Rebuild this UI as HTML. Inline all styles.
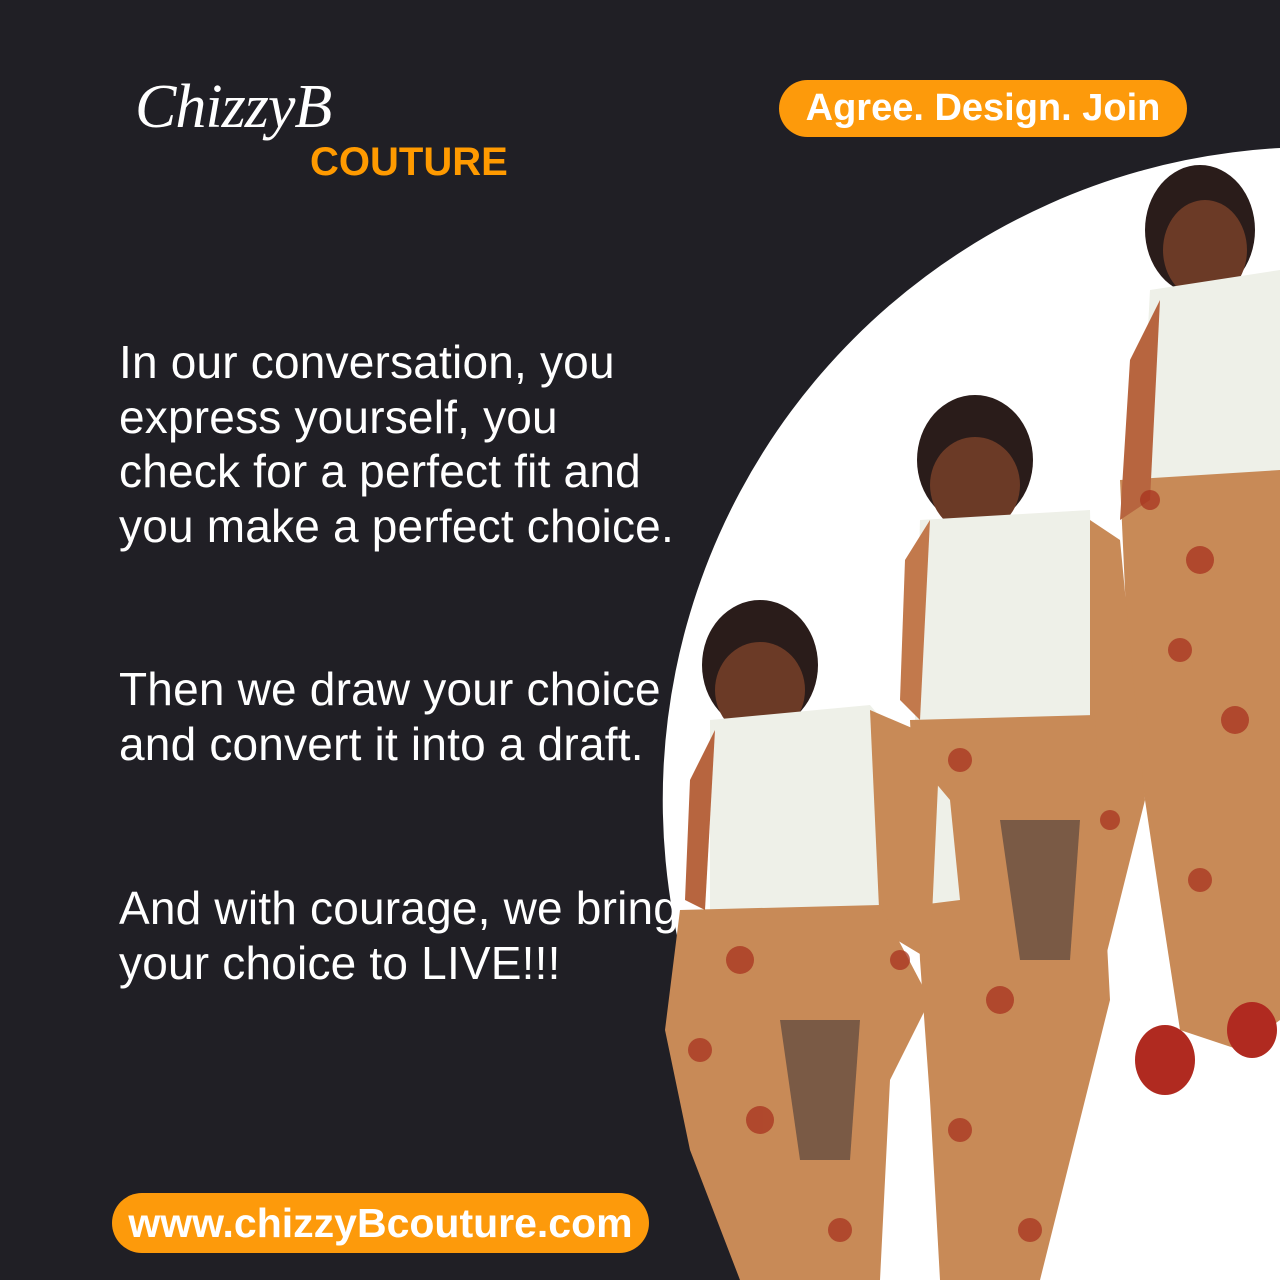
<!DOCTYPE html>
<html style="width:1280px;height:1280px;overflow:hidden"><head><meta charset="utf-8"><style>
*{margin:0;padding:0;box-sizing:border-box}
body{width:1280px;height:1280px;background:#201f25;position:relative;overflow:hidden;font-family:"Liberation Sans",sans-serif}
.t{position:absolute;left:119px;color:#fff;font-size:46px;line-height:54.5px;letter-spacing:0.2px}
.pill{position:absolute;background:#fd9a0b;color:#fff;font-weight:bold;border-radius:30px;text-align:center}
</style></head><body>
<svg style="position:absolute;left:0;top:0;display:block" width="1280" height="1280">
<path d="M1280 148 A653 653 0 0 0 873 1280 L1280 1280 Z" fill="#fff"/>
<g>
<ellipse cx="1200" cy="230" rx="55" ry="65" fill="#2a1c1a"/><ellipse cx="1205" cy="250" rx="42" ry="50" fill="#6b3a26"/>
<path d="M1150 290 L1280 270 L1280 480 L1140 480 Z" fill="#eef0e8"/>
<path d="M1120 480 L1280 470 L1280 1020 L1240 1050 L1180 1030 L1160 900 L1130 700 Z" fill="#c88a57"/>
<path d="M1130 360 L1160 300 L1150 500 L1120 520 Z" fill="#b7653f"/>
<ellipse cx="1165" cy="1060" rx="30" ry="35" fill="#b02a20"/><ellipse cx="1252" cy="1030" rx="25" ry="28" fill="#b02a20"/>
</g>
<g>
<ellipse cx="975" cy="460" rx="58" ry="65" fill="#2a1c1a"/><ellipse cx="975" cy="485" rx="45" ry="48" fill="#6b3a26"/>
<path d="M920 520 L1090 510 L1095 730 L915 720 Z" fill="#eef0e8"/>
<path d="M905 560 L930 520 L920 720 L900 700 Z" fill="#c2794c"/>
<path d="M1090 520 L1120 540 L1145 800 L1100 980 L1090 720 Z" fill="#c88a57"/>
<path d="M910 720 L1095 715 L1110 1000 L1060 1200 L1040 1280 L940 1280 L930 1100 L920 960 Z" fill="#c88a57"/>
<path d="M1000 820 L1080 820 L1070 960 L1020 960 Z" fill="#7a5a45"/>
</g>
<g>
<ellipse cx="760" cy="665" rx="58" ry="65" fill="#2a1c1a"/><ellipse cx="760" cy="690" rx="45" ry="48" fill="#6b3a26"/>
<path d="M710 720 L870 705 L950 800 L960 900 L880 910 L710 910 Z" fill="#eef0e8"/>
<path d="M870 710 L940 740 L930 960 L880 930 Z" fill="#c88a57"/>
<path d="M680 910 L880 905 L930 1000 L890 1080 L880 1280 L740 1280 L690 1150 L665 1030 Z" fill="#c88a57"/>
<path d="M690 780 L715 730 L705 910 L685 900 Z" fill="#b7653f"/>
<path d="M780 1020 L860 1020 L850 1160 L800 1160 Z" fill="#7a5a45"/>
</g>
<g fill="#a8331f" opacity=".75">
<circle cx="1200" cy="560" r="14"/><circle cx="1180" cy="650" r="12"/><circle cx="1235" cy="720" r="14"/><circle cx="1200" cy="880" r="12"/><circle cx="1150" cy="500" r="10"/>
<circle cx="960" cy="760" r="12"/><circle cx="1000" cy="1000" r="14"/><circle cx="960" cy="1130" r="12"/><circle cx="1030" cy="1230" r="12"/><circle cx="1110" cy="820" r="10"/>
<circle cx="740" cy="960" r="14"/><circle cx="700" cy="1050" r="12"/><circle cx="760" cy="1120" r="14"/><circle cx="840" cy="1230" r="12"/><circle cx="900" cy="960" r="10"/>
</g>
</svg>
<div style="position:absolute;left:135px;top:72px;color:#fff;font-family:'Liberation Serif',serif;font-style:italic;font-size:62px;letter-spacing:-1px">ChizzyB</div>
<div style="position:absolute;left:310px;top:140px;color:#ff9a00;font-weight:bold;font-size:40px">COUTURE</div>
<div class="pill" style="left:779px;top:80px;width:408px;height:57px;font-size:38px;line-height:57px">Agree. Design. Join</div>
<div class="t" style="top:335px">In our conversation, you<br>express yourself, you<br>check for a perfect fit and<br>you make a perfect choice.</div>
<div class="t" style="top:662px">Then we draw your choice<br>and convert it into a draft.</div>
<div class="t" style="top:881px">And with courage, we bring<br>your choice to LIVE!!!</div>
<div class="pill" style="left:112px;top:1193px;width:537px;height:60px;font-size:41px;line-height:60px">www.chizzyBcouture.com</div>
</body></html>
